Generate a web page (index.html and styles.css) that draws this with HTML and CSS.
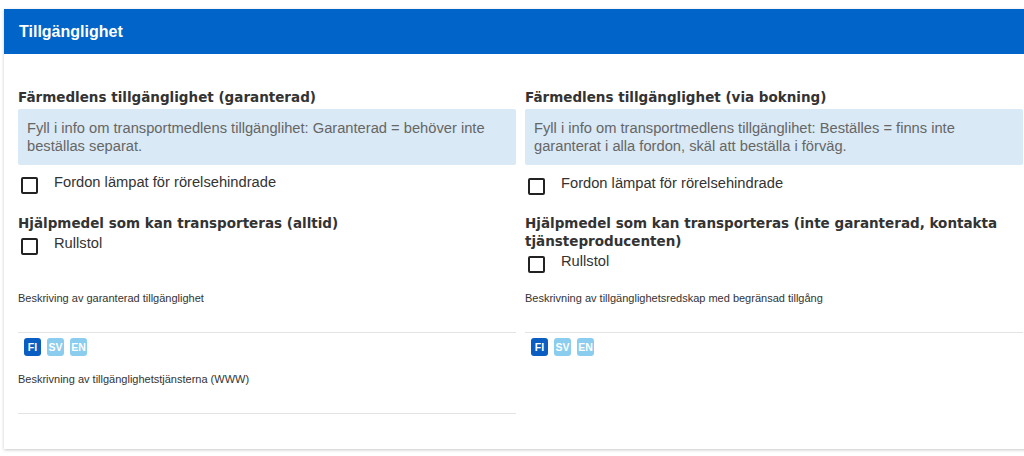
FILE: index.html
```html
<!DOCTYPE html>
<html lang="sv">
<head>
<meta charset="utf-8">
<title>Tillgänglighet</title>
<link rel="stylesheet" href="styles.css">
</head>
<body>
<section class="card">
  <header class="card-header">Tillgänglighet</header>
  <div class="card-body">
    <div class="grid">
      <div class="cell">
        <h3 class="heading">Färmedlens tillgänglighet (garanterad)</h3>
        <div class="info">Fyll i info om transportmedlens tillgänglihet: Garanterad = behöver inte beställas separat.</div>
        <label class="check"><span class="box"></span><span>Fordon lämpat för rörelsehindrade</span></label>
      </div>
      <div class="cell">
        <h3 class="heading">Färmedlens tillgänglighet (via bokning)</h3>
        <div class="info">Fyll i info om transportmedlens tillgänglihet: Beställes = finns inte garanterat i alla fordon, skäl att beställa i förväg.</div>
        <label class="check check-right"><span class="box"></span><span>Fordon lämpat för rörelsehindrade</span></label>
      </div>
      <div class="cell">
        <h3 class="heading heading-2">Hjälpmedel som kan transporteras (alltid)</h3>
        <label class="check check-tight"><span class="box"></span><span>Rullstol</span></label>
      </div>
      <div class="cell">
        <h3 class="heading heading-2">Hjälpmedel som kan transporteras (inte garanterad, kontakta tjänsteproducenten)</h3>
        <label class="check check-tight"><span class="box"></span><span>Rullstol</span></label>
      </div>
      <div class="cell field">
        <div class="field-label">Beskriving av garanterad tillgänglighet</div>
        <div class="field-input"></div>
        <div class="langs"><span class="lang active">FI</span><span class="lang">SV</span><span class="lang">EN</span></div>
      </div>
      <div class="cell field">
        <div class="field-label">Beskrivning av tillgänglighetsredskap med begränsad tillgång</div>
        <div class="field-input"></div>
        <div class="langs"><span class="lang active">FI</span><span class="lang">SV</span><span class="lang">EN</span></div>
      </div>
      <div class="cell field field-www">
        <div class="field-label">Beskrivning av tillgänglighetstjänsterna (WWW)</div>
        <div class="field-input"></div>
      </div>
    </div>
  </div>
</section>
</body>
</html>
```

FILE: styles.css
```css
html, body {
  margin: 0;
  padding: 0;
  background: #ffffff;
  overflow: hidden;
}
body {
  width: 1024px;
  height: 456px;
  font-family: "Liberation Sans", Arial, sans-serif;
  color: #333333;
}
.card {
  margin: 9px 0 0 4px;
  width: 1040px;
  height: 440px;
  background: #ffffff;
  box-shadow: 0 1px 3px rgba(0, 0, 0, 0.22);
  box-sizing: border-box;
}
.card-header {
  height: 45px;
  background: #0064c8;
  color: #ffffff;
  font-weight: bold;
  font-size: 16px;
  line-height: 46px;
  padding-left: 15px;
}
.card-body {
  padding: 34px 0 0 14px;
}
.grid {
  display: grid;
  grid-template-columns: 498px 498px;
  column-gap: 9px;
}
.heading {
  margin: 0;
  font-family: "DejaVu Sans", sans-serif;
  font-weight: bold;
  font-size: 13.5px;
  line-height: 18px;
  color: #333333;
}
.info {
  margin-top: 3px;
  background: #d9e9f5;
  color: #666666;
  font-size: 14.7px;
  line-height: 18px;
  padding: 10px 10px 10px 9px;
  border-radius: 2px;
}
.check {
  display: flex;
  align-items: flex-start;
  gap: 16px;
  font-size: 14.7px;
  line-height: 17px;
  margin-top: 9px;
  padding-left: 3px;
  height: 25px;
}
.check-right {
  margin-top: 10px;
}
.box {
  width: 13px;
  height: 13px;
  border: 2px solid #222222;
  border-radius: 2px;
  margin-top: 3px;
  flex: none;
}
.heading-2 {
  margin-top: 14px;
}
.check-tight {
  margin-top: 3px;
}
.field {
  padding-top: 13px;
}
.field-label {
  font-size: 11px;
  line-height: 14px;
  color: #333333;
}
.field-input {
  height: 27px;
  border-bottom: 1px solid #e3e3e3;
}
.langs {
  display: flex;
  gap: 6px;
  padding: 5px 0 0 6px;
}
.lang {
  width: 17px;
  height: 18px;
  border-radius: 3px;
  background: #8bcdee;
  color: #ffffff;
  font-size: 10.5px;
  font-weight: bold;
  line-height: 18px;
  text-align: center;
}
.lang.active {
  background: #0a5ec2;
}
.field-www {
  padding-top: 16px;
}
```
